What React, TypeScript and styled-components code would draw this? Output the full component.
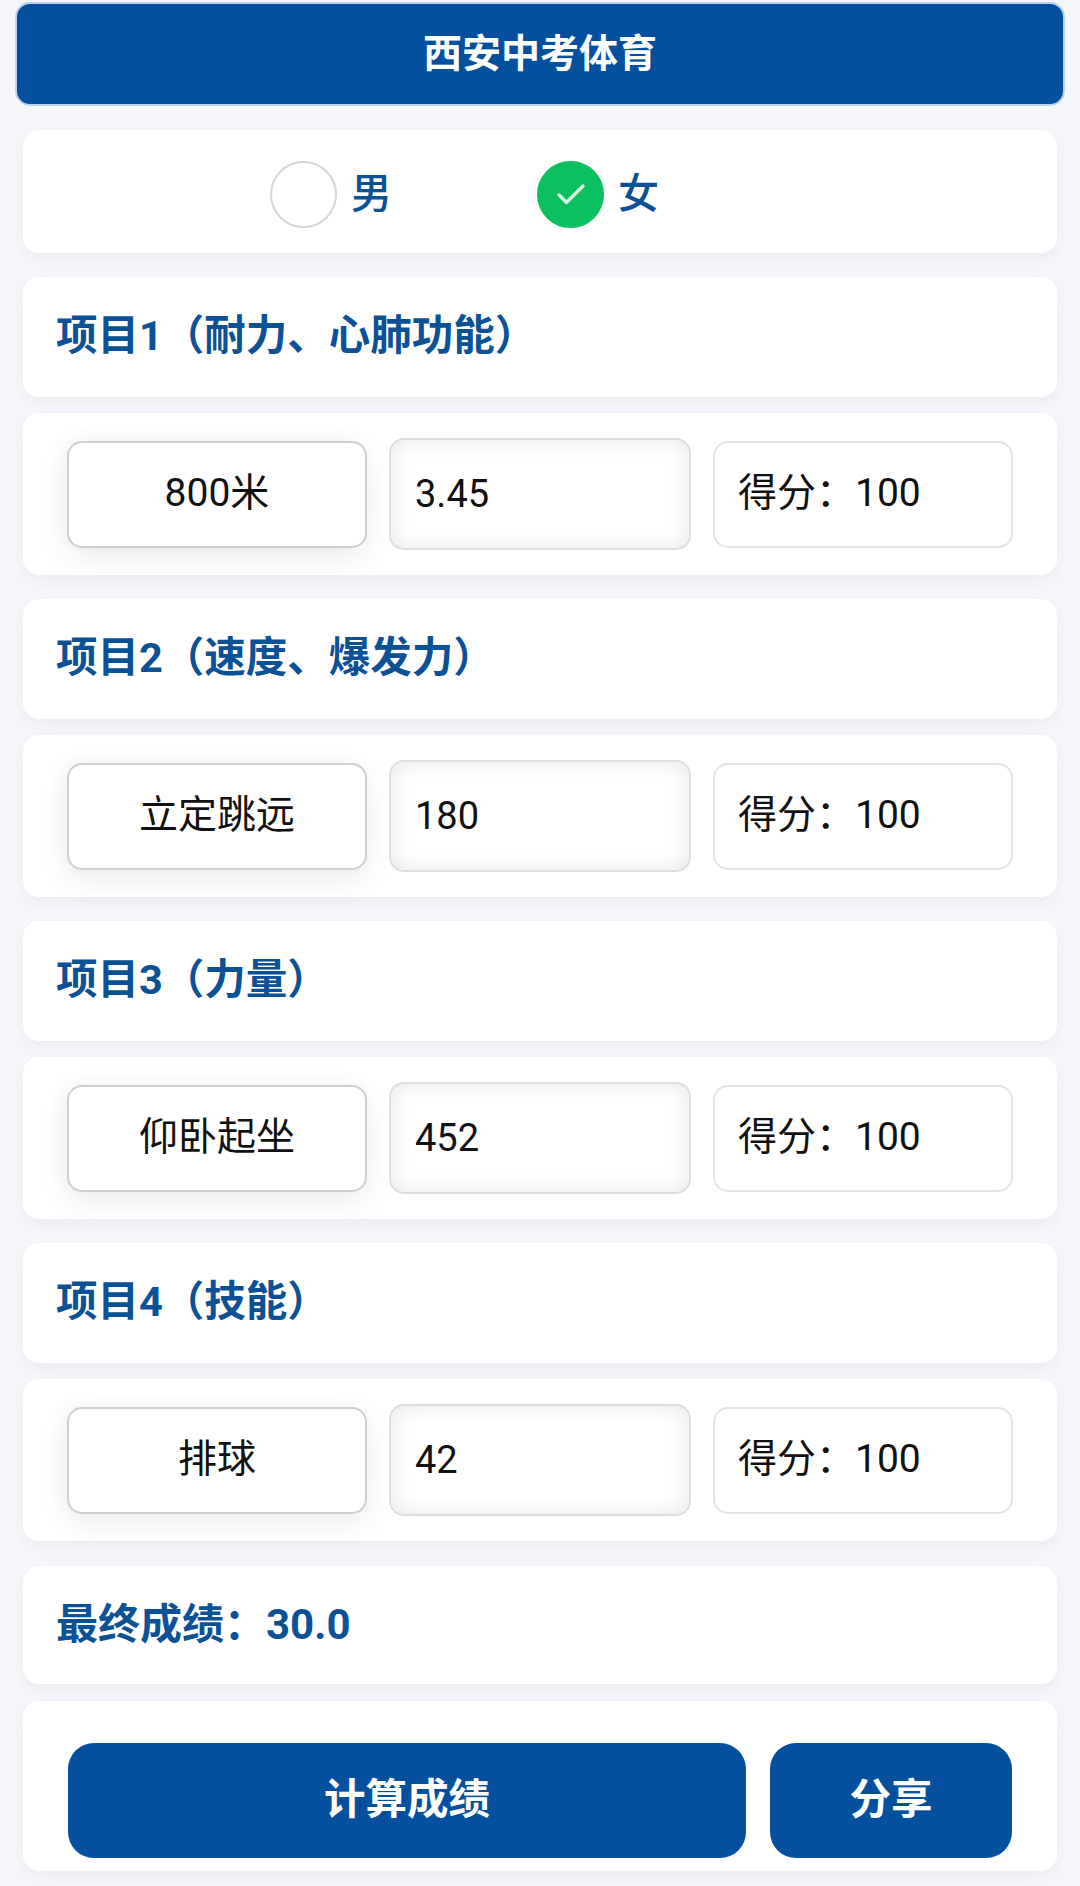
import React from "react";
import styled, { createGlobalStyle } from "styled-components";
import { Check } from "lucide-react";

const FONT = `Roboto, "Noto Sans CJK SC", sans-serif`;
const BLUE = "#04509f";
const INK = "#0b5196";

const Global = createGlobalStyle`
  html, body { margin: 0; padding: 0; background: #f5f6f9; }
  * { box-sizing: border-box; }
  body { font-family: ${FONT}; }
`;

const Page = styled.div`
  width: 1080px;
  height: 1886px;
  padding: 2px 15px 0;
  overflow: hidden;
  background: #f5f6f9;
`;

const Header = styled.header`
  height: 104px;
  margin-bottom: 24px;
  padding-bottom: 9px;
  display: flex;
  align-items: center;
  justify-content: center;
  background: ${BLUE};
  border: 2px solid #b9d3ee;
  border-radius: 15px;
  color: #fff;
  font-size: 39px;
  font-weight: 700;
`;

const Card = styled.section<{ $h: number; $after: number }>`
  height: ${(p) => p.$h}px;
  margin: 0 8px ${(p) => p.$after}px;
  background: #fff;
  border-radius: 16px;
  box-shadow: 0 6px 14px rgba(30, 50, 80, 0.05);
`;

const GenderRow = styled(Card)`
  display: flex;
  align-items: center;
  padding: 6px 0 0 247px;
`;

const GenderOption = styled.div`
  width: 267px;
  display: flex;
  align-items: center;
  gap: 14px;
  color: ${INK};
  font-size: 41px;
  font-weight: 500;
`;

const GenderLabel = styled.span`
  padding-bottom: 9px;
`;

const RadioMark = styled.span<{ $on?: boolean }>`
  width: 67px;
  height: 67px;
  border-radius: 50%;
  display: flex;
  align-items: center;
  justify-content: center;
  background: ${(p) => (p.$on ? "#0cc05f" : "#fff")};
  border: 2px solid ${(p) => (p.$on ? "#0cc05f" : "#d6d6d6")};
  color: #d8f7e3;
`;

const TitleCard = styled(Card)<{ $size: number }>`
  display: flex;
  align-items: center;
  padding: 0 0 10px 33px;
  color: ${INK};
  font-size: ${(p) => p.$size}px;
  font-weight: 700;
`;

const ItemRow = styled(Card)`
  display: grid;
  grid-template-columns: 300px 302px 300px;
  column-gap: 22px;
  align-items: center;
  padding: 0 44px;
`;

const Select = styled.div`
  height: 107px;
  padding-bottom: 10px;
  display: flex;
  align-items: center;
  justify-content: center;
  background: #fff;
  border: 2px solid #cfcfcf;
  border-radius: 15px;
  box-shadow: 0 10px 30px rgba(0, 0, 0, 0.08), -6px -6px 20px rgba(0, 0, 0, 0.025);
  color: #111;
  font-size: 39px;
`;

const ValueInput = styled.input`
  width: 100%;
  height: 112px;
  padding: 0 24px;
  background: #fff;
  border: 2px solid #dedede;
  border-radius: 15px;
  box-shadow: inset 0 0 22px rgba(0, 0, 0, 0.1);
  color: #111;
  font-family: ${FONT};
  font-size: 38px;
  outline: none;
`;

const Score = styled.div`
  height: 107px;
  padding: 0 0 10px 23px;
  display: flex;
  align-items: center;
  background: #fff;
  border: 2px solid #e4e4e4;
  border-radius: 15px;
  color: #111;
  font-size: 39px;
`;

const Actions = styled(Card)`
  display: flex;
  gap: 24px;
  padding: 42px 44px 13px 45px;
`;

const Action = styled.button<{ $w: number }>`
  width: ${(p) => p.$w}px;
  height: 115px;
  padding: 0 0 10px;
  background: ${BLUE};
  border: 0;
  border-radius: 26px;
  color: #fff;
  font-family: ${FONT};
  font-size: 41.5px;
  font-weight: 700;
`;

const items = [
  { title: "项目1（耐力、心肺功能）", name: "800米", value: "3.45" },
  { title: "项目2（速度、爆发力）", name: "立定跳远", value: "180" },
  { title: "项目3（力量）", name: "仰卧起坐", value: "452" },
  { title: "项目4（技能）", name: "排球", value: "42" },
];

export default function App() {
  return (
    <Page>
      <Global />
      <Header>西安中考体育</Header>
      <GenderRow $h={123} $after={24}>
        <GenderOption>
          <RadioMark />
          <GenderLabel>男</GenderLabel>
        </GenderOption>
        <GenderOption>
          <RadioMark $on>
            <Check size={36} strokeWidth={2.2} />
          </RadioMark>
          <GenderLabel>女</GenderLabel>
        </GenderOption>
      </GenderRow>
      {items.map((it, i) => (
        <React.Fragment key={it.title}>
          <TitleCard $h={120} $after={16} $size={41.5}>{it.title}</TitleCard>
          <ItemRow $h={162} $after={i === 3 ? 25 : 24}>
            <Select>{it.name}</Select>
            <ValueInput defaultValue={it.value} readOnly />
            <Score>得分：100</Score>
          </ItemRow>
        </React.Fragment>
      ))}
      <TitleCard $h={118} $after={17} $size={42}>最终成绩：30.0</TitleCard>
      <Actions $h={170} $after={0}>
        <Action $w={678}>计算成绩</Action>
        <Action $w={242}>分享</Action>
      </Actions>
    </Page>
  );
}
